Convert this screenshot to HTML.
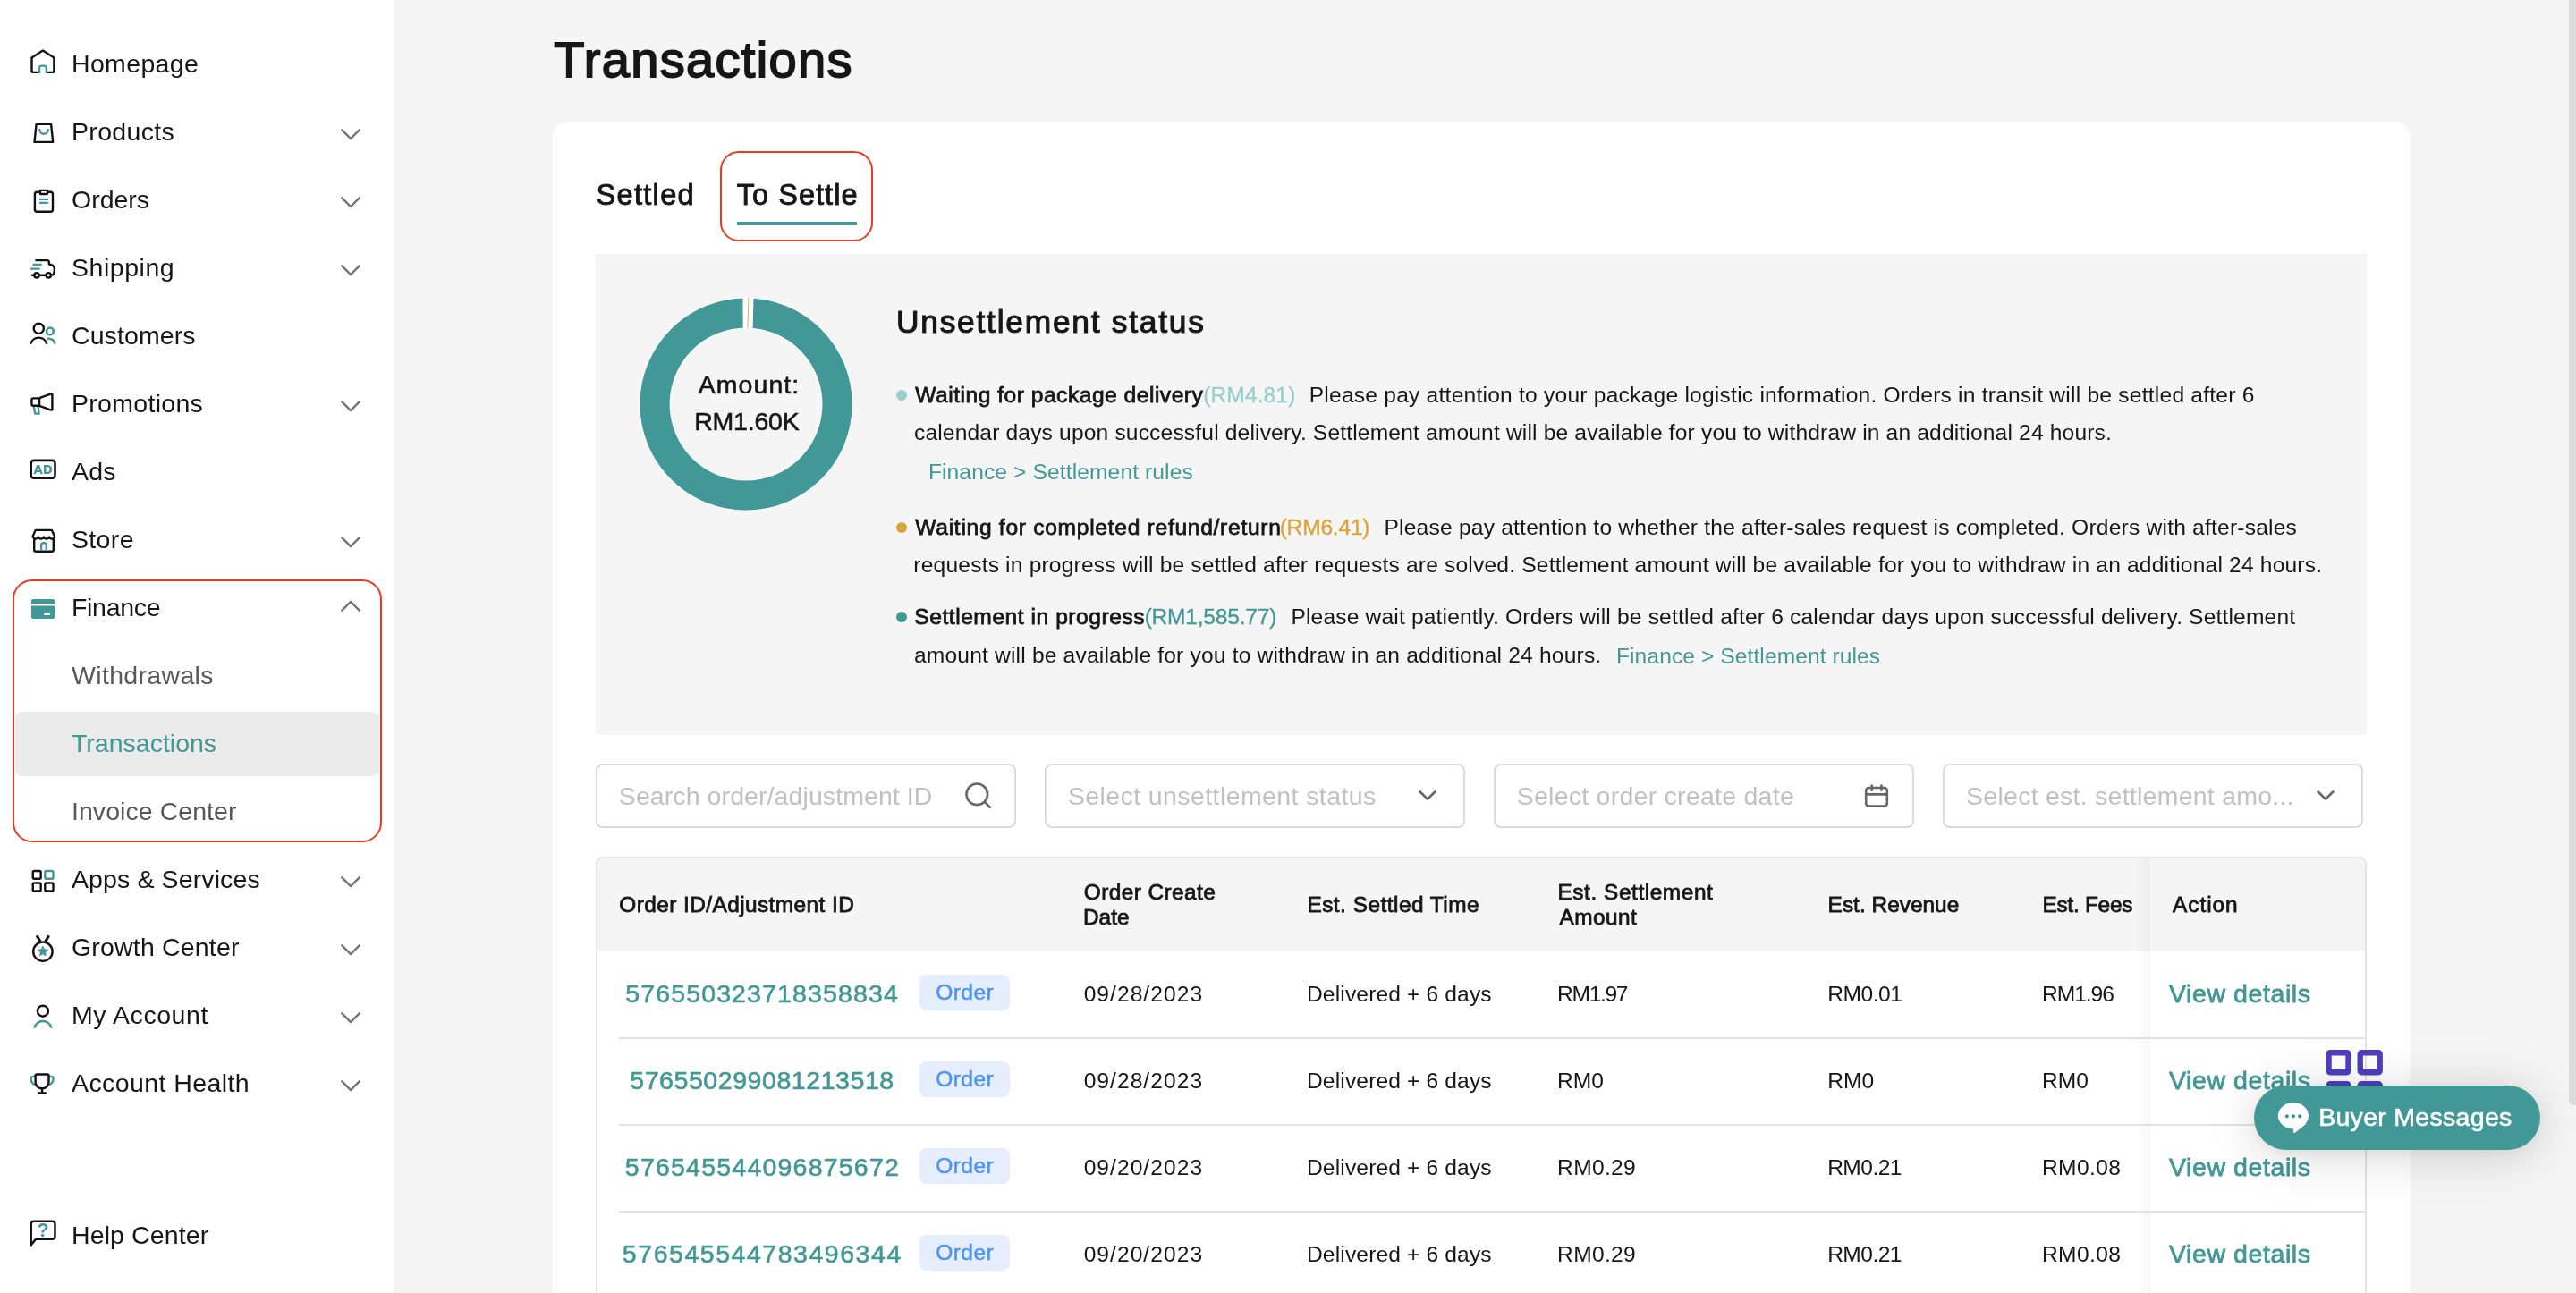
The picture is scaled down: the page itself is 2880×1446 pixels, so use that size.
<!DOCTYPE html>
<html lang="en"><head><meta charset="utf-8"><title>Transactions</title>
<style>
html,body{margin:0;padding:0;width:2880px;height:1446px;overflow:hidden;background:#f5f5f5;font-family:"Liberation Sans",sans-serif;}
.t{position:absolute;white-space:pre;line-height:1;z-index:2;}
.b{position:absolute;box-sizing:border-box;}
svg{position:absolute;overflow:visible;}
#app{position:absolute;left:0;top:0;width:2880px;height:1446px;overflow:hidden;will-change:transform;}
.z5{z-index:5}.z6{z-index:6}
</style></head><body>
<div id="app">
<nav>
<div class="b" style="left:0px;top:0px;width:440px;height:1446px;background:#fff;"></div>
<div class="b" style="left:17px;top:796px;width:407px;height:72px;background:#ebebeb;border-radius:8px;"></div>
<div class="b" style="left:14px;top:648px;width:413px;height:294px;border:2px solid #ea3b1c;border-radius:22px;"></div>
<svg style="left:372px;top:126.5px" width="40" height="40" viewBox="0 0 40 40"><path d="M10.4 18.4 L20.05 28.1 L29.7 18.4" fill="none" stroke="#737373" stroke-width="2.3" stroke-linecap="square"/></svg>
<svg style="left:372px;top:202.5px" width="40" height="40" viewBox="0 0 40 40"><path d="M10.4 18.4 L20.05 28.1 L29.7 18.4" fill="none" stroke="#737373" stroke-width="2.3" stroke-linecap="square"/></svg>
<svg style="left:372px;top:278.5px" width="40" height="40" viewBox="0 0 40 40"><path d="M10.4 18.4 L20.05 28.1 L29.7 18.4" fill="none" stroke="#737373" stroke-width="2.3" stroke-linecap="square"/></svg>
<svg style="left:372px;top:430.5px" width="40" height="40" viewBox="0 0 40 40"><path d="M10.4 18.4 L20.05 28.1 L29.7 18.4" fill="none" stroke="#737373" stroke-width="2.3" stroke-linecap="square"/></svg>
<svg style="left:372px;top:582.5px" width="40" height="40" viewBox="0 0 40 40"><path d="M10.4 18.4 L20.05 28.1 L29.7 18.4" fill="none" stroke="#737373" stroke-width="2.3" stroke-linecap="square"/></svg>
<svg style="left:372px;top:658.5px" width="40" height="40" viewBox="0 0 40 40"><path d="M10.4 23.6 L20.05 13.9 L29.7 23.6" fill="none" stroke="#737373" stroke-width="2.3" stroke-linecap="square"/></svg>
<svg style="left:372px;top:962.5px" width="40" height="40" viewBox="0 0 40 40"><path d="M10.4 18.4 L20.05 28.1 L29.7 18.4" fill="none" stroke="#737373" stroke-width="2.3" stroke-linecap="square"/></svg>
<svg style="left:372px;top:1038.5px" width="40" height="40" viewBox="0 0 40 40"><path d="M10.4 18.4 L20.05 28.1 L29.7 18.4" fill="none" stroke="#737373" stroke-width="2.3" stroke-linecap="square"/></svg>
<svg style="left:372px;top:1114.5px" width="40" height="40" viewBox="0 0 40 40"><path d="M10.4 18.4 L20.05 28.1 L29.7 18.4" fill="none" stroke="#737373" stroke-width="2.3" stroke-linecap="square"/></svg>
<svg style="left:372px;top:1190.5px" width="40" height="40" viewBox="0 0 40 40"><path d="M10.4 18.4 L20.05 28.1 L29.7 18.4" fill="none" stroke="#737373" stroke-width="2.3" stroke-linecap="square"/></svg>
<svg style="left:24px;top:44px" width="50" height="50" viewBox="0 0 50 50" fill="none" stroke-width="2.4" stroke-linejoin="round"><path d="M23.9 12.6 L36.4 20.6 V34.9 a2 2 0 0 1 -2 2 H13.5 a2 2 0 0 1 -2 -2 V20.6 Z" stroke="#111"/><rect x="20.1" y="33" width="7.7" height="6" fill="#fff"/><path d="M20.1 38.2 V31.8 a2.2 2.2 0 0 1 2.2 -2.2 H25.6 a2.2 2.2 0 0 1 2.2 2.2 V38.2" stroke="#429896"/></svg>
<svg style="left:24px;top:120px" width="50" height="50" viewBox="0 0 50 50" fill="none" stroke-width="2.4" stroke-linejoin="round"><path d="M16.6 18.9 H33.1 L35.2 38.9 H14.5 Z" stroke="#111"/><path d="M20.3 25 a4.7 4.7 0 0 0 9.4 0" stroke="#429896" stroke-linecap="round"/></svg>
<svg style="left:24px;top:196px" width="50" height="50" viewBox="0 0 50 50" fill="none" stroke-width="2.4" stroke-linejoin="round"><rect x="14.9" y="18.8" width="20.1" height="22" rx="2.6" stroke="#111"/><rect x="20.9" y="16.9" width="8.1" height="4.1" rx="0.6" fill="#fff" stroke="#111"/><path d="M20.1 26.9 H30 M20.1 30.9 H30" stroke="#429896" stroke-width="2.1"/></svg>
<svg style="left:24px;top:272px" width="50" height="50" viewBox="0 0 50 50" fill="none" stroke-width="2.4" stroke-linejoin="round"><path d="M15.4 19.1 H28.6 a2.3 2.3 0 0 1 2.3 2.3 V23.6 C34.6 23.9 36.9 26 36.9 28.8 C36.9 31 36.4 33.2 35.8 34.6 C35.4 35.5 34.6 35.8 33 35.8" stroke="#111"/><path d="M11.2 35.8 H14.3 M19.7 35.8 H27.5" stroke="#111"/><circle cx="17" cy="35.8" r="2.7" stroke="#111"/><circle cx="30.2" cy="35.8" r="2.7" stroke="#111"/><path d="M12.6 24 H22.6 M9.7 28.6 H20.7" stroke="#429896"/></svg>
<svg style="left:24px;top:348px" width="50" height="50" viewBox="0 0 50 50" fill="none" stroke-width="2.4" stroke-linejoin="round"><circle cx="19.3" cy="19.3" r="5.6" stroke="#111"/><path d="M10.2 36.7 A9.4 9.4 0 0 1 28.4 36.7" stroke="#111"/><circle cx="31.9" cy="22.4" r="3.9" stroke="#429896" stroke-width="2.6"/><path d="M28.7 30.9 C33.2 30.3 36.6 32.6 37.7 36.7" stroke="#429896" stroke-width="2.6"/></svg>
<svg style="left:24px;top:424px" width="50" height="50" viewBox="0 0 50 50" fill="none" stroke-width="2.4" stroke-linejoin="round"><path d="M13.8 31 L15.2 38.6 H19.6 L18.7 31" stroke="#429896"/><path d="M20.1 21.4 H13.4 a2 2 0 0 0 -2 2 V27.7 a2 2 0 0 0 2 2 H20.1 Z" stroke="#111"/><path d="M20.1 21.2 L33.2 16.3 a0.9 0.9 0 0 1 1.2 0.85 V33.7 a0.9 0.9 0 0 1 -1.2 0.85 L20.1 29.8" stroke="#111"/></svg>
<svg style="left:24px;top:500px" width="50" height="50" viewBox="0 0 50 50" fill="none" stroke-width="2.4" stroke-linejoin="round"><rect x="10.7" y="14.9" width="26.8" height="19.9" rx="3" stroke="#111" stroke-width="2.6"/><text x="24.1" y="29.8" text-anchor="middle" font-family="'DejaVu Sans','Liberation Sans',sans-serif" font-weight="700" font-size="13.3" fill="#429896" stroke="none" textLength="21.4" lengthAdjust="spacingAndGlyphs">AD</text></svg>
<svg style="left:24px;top:576px" width="50" height="50" viewBox="0 0 50 50" fill="none" stroke-width="2.4" stroke-linejoin="round"><path d="M15.6 16.9 H33.9 L37 23.6 V24.6 q-3.05 4.4 -6.1 0 q-3 4.4 -6.05 0 q-3 4.4 -6.05 0 q-3 4.4 -6.05 0 V23.6 Z" stroke="#111"/><path d="M14.2 26 V38.8 a2 2 0 0 0 2 2 H33.8 a2 2 0 0 0 2 -2 V26" stroke="#111"/><path d="M22.1 39.6 V33.5 a2.2 2.2 0 0 1 2.2 -2.2 H25.6 a2.2 2.2 0 0 1 2.2 2.2 V39.6" stroke="#429896"/></svg>
<svg style="left:24px;top:654px" width="50" height="50" viewBox="0 0 50 50" fill="none" stroke-width="2.4" stroke-linejoin="round"><path d="M10.9 20.9 V18 a2.1 2.1 0 0 1 2.1 -2.1 H35.2 a2.1 2.1 0 0 1 2.1 2.1 V20.9 Z" fill="#429896"/><path d="M10.9 23.4 H37.3 V36 a2.1 2.1 0 0 1 -2.1 2.1 H13 a2.1 2.1 0 0 1 -2.1 -2.1 Z" fill="#429896"/><rect x="25.2" y="31" width="6.9" height="3" rx="0.6" fill="#fff"/></svg>
<svg style="left:24px;top:958px" width="50" height="50" viewBox="0 0 50 50" fill="none" stroke-width="2.4" stroke-linejoin="round"><rect x="12.75" y="16.05" width="8.9" height="8.7" rx="1.4" stroke="#111"/><rect x="26.3" y="16.05" width="9.2" height="8.7" rx="1.4" stroke="#429896"/><rect x="12.75" y="29.55" width="8.9" height="8.9" rx="1.4" stroke="#111"/><rect x="26.3" y="29.55" width="9.2" height="8.9" rx="1.4" stroke="#111"/></svg>
<svg style="left:24px;top:1034px" width="50" height="50" viewBox="0 0 50 50" fill="none" stroke-width="2.4" stroke-linejoin="round"><circle cx="23.9" cy="30.2" r="10.7" stroke="#111"/><path d="M17.1 12.3 L21.2 19.2 M30.7 12.3 L26.6 19.2" stroke="#111" stroke-width="3.1"/><path d="M23.9 24 L25.6 27.6 L29.8 28.2 L26.7 31 L27.5 35 L23.9 33.1 L20.3 35 L21.1 31 L18 28.2 L22.2 27.6 Z" fill="#429896" stroke="#429896" stroke-width="0.6"/></svg>
<svg style="left:24px;top:1110px" width="50" height="50" viewBox="0 0 50 50" fill="none" stroke-width="2.4" stroke-linejoin="round"><circle cx="23.9" cy="20.7" r="6" stroke="#111"/><path d="M14.2 39.8 A10 10 0 0 1 33.7 39.8" stroke="#429896"/></svg>
<svg style="left:24px;top:1186px" width="50" height="50" viewBox="0 0 50 50" fill="none" stroke-width="2.4" stroke-linejoin="round"><path d="M15.6 18 H12.6 a2 2 0 0 0 -2 2 C10.6 23.6 12.2 26.2 15.6 27.2 M30.5 18 H33.6 a2 2 0 0 1 2 2 C35.6 23.6 34 26.2 30.5 27.2" stroke="#429896"/><path d="M17.1 15.5 H29 a1.5 1.5 0 0 1 1.5 1.5 V24 C30.5 28.4 27.2 31.3 23.05 31.3 C18.9 31.3 15.6 28.4 15.6 24 V17 a1.5 1.5 0 0 1 1.5 -1.5 Z" stroke="#111"/><path d="M23.05 31.3 V36.4 M18.4 36.4 H27.8" stroke="#111"/></svg>
<svg style="left:24px;top:1356px" width="50" height="50" viewBox="0 0 50 50" fill="none" stroke-width="2.4" stroke-linejoin="round"><path d="M10.7 36.2 V12.7 a3 3 0 0 1 3 -3 H34.5 a3 3 0 0 1 3 3 V26.7 a3 3 0 0 1 -3 3 H17 a2 2 0 0 0 -1.5 0.7 Z" stroke="#111" stroke-width="2.5"/><text x="24" y="27.2" text-anchor="middle" font-family="'Liberation Sans',sans-serif" font-weight="700" font-size="21.5" fill="#429896" stroke="none">?</text></svg>
<span class="t" style="left:80.00px;top:57px;font-size:28.5px;letter-spacing:0.340px;color:#161616;">Homepage</span>
<span class="t" style="left:80.00px;top:133px;font-size:28.5px;letter-spacing:0.328px;color:#161616;">Products</span>
<span class="t" style="left:80.00px;top:209px;font-size:28.5px;letter-spacing:-0.006px;color:#161616;">Orders</span>
<span class="t" style="left:80.00px;top:285px;font-size:28.5px;letter-spacing:0.536px;color:#161616;">Shipping</span>
<span class="t" style="left:80.00px;top:361px;font-size:28.5px;letter-spacing:0.085px;color:#161616;">Customers</span>
<span class="t" style="left:80.00px;top:437px;font-size:28.5px;letter-spacing:0.303px;color:#161616;">Promotions</span>
<span class="t" style="left:80.00px;top:513px;font-size:28.5px;letter-spacing:0.227px;color:#161616;">Ads</span>
<span class="t" style="left:80.00px;top:589px;font-size:28.5px;letter-spacing:0.348px;color:#161616;">Store</span>
<span class="t" style="left:80.00px;top:665px;font-size:28.5px;letter-spacing:-0.315px;color:#161616;">Finance</span>
<span class="t" style="left:80.00px;top:741px;font-size:28.5px;letter-spacing:0.331px;color:#585858;">Withdrawals</span>
<span class="t" style="left:80.00px;top:817px;font-size:28.5px;letter-spacing:-0.001px;color:#429896;">Transactions</span>
<span class="t" style="left:80.00px;top:893px;font-size:28.5px;letter-spacing:0.051px;color:#585858;">Invoice Center</span>
<span class="t" style="left:80.00px;top:969px;font-size:28.5px;letter-spacing:0.113px;color:#161616;">Apps &amp; Services</span>
<span class="t" style="left:80.00px;top:1045px;font-size:28.5px;letter-spacing:0.175px;color:#161616;">Growth Center</span>
<span class="t" style="left:80.00px;top:1121px;font-size:28.5px;letter-spacing:0.559px;color:#161616;">My Account</span>
<span class="t" style="left:80.00px;top:1197px;font-size:28.5px;letter-spacing:0.409px;color:#161616;">Account Health</span>
<span class="t" style="left:80.00px;top:1367px;font-size:28.5px;letter-spacing:0.105px;color:#161616;">Help Center</span>
</nav>
<main>
<div class="b" style="left:2872px;top:-8px;width:12px;height:1244px;background:#dcdcdc;border-radius:6px;"></div>
<div class="b" style="left:618px;top:136px;width:2076px;height:1400px;background:#fff;border-radius:16px;"></div>
<div class="b" style="left:805px;top:169px;width:171px;height:101px;border:2px solid #ea3b1c;border-radius:21px;"></div>
<div class="b" style="left:824px;top:248px;width:134px;height:4px;background:#429896;"></div>
<div class="b" style="left:666px;top:284px;width:1980px;height:538px;background:#f5f5f5;"></div>
<svg style="left:0px;top:0px" width="2880" height="1446" viewBox="0 0 2880 1446"><circle cx="834.05" cy="452" r="102.025" fill="none" stroke="#429896" stroke-width="34.35000000000001"/><circle cx="834.05" cy="452" r="119.2" fill="none" stroke="#fff" stroke-width="1.2" stroke-opacity="0.9"/><circle cx="834.05" cy="452" r="84.85" fill="none" stroke="#fff" stroke-width="1.2" stroke-opacity="0.9"/><path d="M830.4 331.8 L842.5 331.8 L841.6 368.15 L830.7 368.15 Z" fill="#fff"/><path d="M836.9 332.8 L835.9 367.15" stroke="#e0a63c" stroke-width="0.9"/></svg>
<div class="b" style="left:1002px;top:436px;width:12px;height:12px;background:#97cfcc;border-radius:6px;"></div>
<div class="b" style="left:1002px;top:584px;width:12px;height:12px;background:#dba43b;border-radius:6px;"></div>
<div class="b" style="left:1002px;top:684px;width:12px;height:12px;background:#429896;border-radius:6px;"></div>
<div class="b" style="left:666px;top:854px;width:470px;height:72px;background:#fff;border:2px solid #dadada;border-radius:8px;"></div>
<div class="b" style="left:1168px;top:854px;width:470px;height:72px;background:#fff;border:2px solid #dadada;border-radius:8px;"></div>
<div class="b" style="left:1670px;top:854px;width:470px;height:72px;background:#fff;border:2px solid #dadada;border-radius:8px;"></div>
<div class="b" style="left:2172px;top:854px;width:470px;height:72px;background:#fff;border:2px solid #dadada;border-radius:8px;"></div>
<svg style="left:1070px;top:866px" width="48" height="48" viewBox="0 0 48 48"><circle cx="22.3" cy="22.3" r="11.8" fill="none" stroke="#666666" stroke-width="2.6"/><path d="M30.9 30.9 L37.6 37.6" stroke="#666666" stroke-width="2.6" fill="none"/></svg>
<svg style="left:1576px;top:869px" width="40" height="40" viewBox="0 0 40 40"><path d="M11.6 16.5 L20 24.6 L28.4 16.5" fill="none" stroke="#666666" stroke-width="2.7" stroke-linecap="round" stroke-linejoin="round"/></svg>
<svg style="left:2580px;top:869px" width="40" height="40" viewBox="0 0 40 40"><path d="M11.6 16.5 L20 24.6 L28.4 16.5" fill="none" stroke="#666666" stroke-width="2.7" stroke-linecap="round" stroke-linejoin="round"/></svg>
<svg style="left:2074px;top:866px" width="48" height="48" viewBox="0 0 48 48"><rect x="12.2" y="15" width="23.6" height="20.6" rx="3" fill="none" stroke="#666666" stroke-width="2.6"/><path d="M12.2 22.4 H35.8 M18.7 11.4 V18.8 M29.4 11.4 V18.8" stroke="#666666" stroke-width="2.6" fill="none"/></svg>
<div class="b" style="left:666px;top:958px;width:1980px;height:600px;background:#fff;border:2px solid #e3e3e3;border-radius:9px;"></div>
<div class="b" style="left:668px;top:960px;width:1976px;height:104px;background:#f5f5f5;border-radius:7px 7px 0 0;"></div>
<div class="b" style="left:2389px;top:960px;width:15px;height:486px;background:linear-gradient(to right, rgba(0,0,0,0), rgba(0,0,0,0.03));"></div>
<div class="b" style="left:692px;top:1160px;width:1952px;height:2px;background:#e2e2e2;"></div>
<div class="b" style="left:692px;top:1257px;width:1952px;height:2px;background:#e2e2e2;"></div>
<div class="b" style="left:692px;top:1354px;width:1952px;height:2px;background:#e2e2e2;"></div>
<div class="b" style="left:1028px;top:1089.8px;width:101px;height:40px;background:#e6edfd;border-radius:8px;"></div>
<div class="b" style="left:1028px;top:1186.8px;width:101px;height:40px;background:#e6edfd;border-radius:8px;"></div>
<div class="b" style="left:1028px;top:1283.8px;width:101px;height:40px;background:#e6edfd;border-radius:8px;"></div>
<div class="b" style="left:1028px;top:1380.8px;width:101px;height:40px;background:#e6edfd;border-radius:8px;"></div>
<span class="t" style="left:619.24px;top:39px;font-size:56px;letter-spacing:1.344px;color:#161616;-webkit-text-stroke:1.8px #161616;">Transactions</span>
<span class="t" style="left:666.47px;top:202px;font-size:32.5px;letter-spacing:1.331px;color:#161616;-webkit-text-stroke:0.9px #161616;">Settled</span>
<span class="t" style="left:823.72px;top:202px;font-size:32.5px;letter-spacing:1.038px;color:#161616;-webkit-text-stroke:0.9px #161616;">To Settle</span>
<span class="t" style="left:780.64px;top:416px;font-size:28.5px;letter-spacing:1.086px;color:#161616;-webkit-text-stroke:0.6px #161616;">Amount:</span>
<span class="t" style="left:776.21px;top:457px;font-size:28.5px;letter-spacing:-0.209px;color:#161616;-webkit-text-stroke:0.6px #161616;">RM1.60K</span>
<span class="t" style="left:1002.03px;top:342px;font-size:35.3px;letter-spacing:1.776px;color:#161616;-webkit-text-stroke:1.1px #161616;">Unsettlement status</span>
<span class="t" style="left:1023.29px;top:430px;font-size:24.6px;letter-spacing:0.501px;color:#161616;-webkit-text-stroke:0.8px #161616;">Waiting for package delivery</span>
<span class="t" style="left:1345.15px;top:430px;font-size:24.6px;letter-spacing:0.100px;color:#97cfcc;-webkit-text-stroke:0.35px #97cfcc;">(RM4.81)</span>
<span class="t" style="left:1463.68px;top:430px;font-size:24.6px;letter-spacing:0.221px;color:#161616;">Please pay attention to your package logistic information. Orders in transit will be settled after 6</span>
<span class="t" style="left:1021.95px;top:472px;font-size:24.6px;letter-spacing:0.155px;color:#161616;">calendar days upon successful delivery. Settlement amount will be available for you to withdraw in an additional 24 hours.</span>
<span class="t" style="left:1037.88px;top:516px;font-size:24.6px;letter-spacing:0.107px;color:#429896;">Finance &gt; Settlement rules</span>
<span class="t" style="left:1023.29px;top:578px;font-size:24.6px;letter-spacing:0.707px;color:#161616;-webkit-text-stroke:0.8px #161616;">Waiting for completed refund/return</span>
<span class="t" style="left:1430.65px;top:578px;font-size:24.6px;letter-spacing:-0.228px;color:#dba43b;-webkit-text-stroke:0.35px #dba43b;">(RM6.41)</span>
<span class="t" style="left:1547.48px;top:578px;font-size:24.6px;letter-spacing:0.200px;color:#161616;">Please pay attention to whether the after-sales request is completed. Orders with after-sales</span>
<span class="t" style="left:1021.37px;top:620px;font-size:24.6px;letter-spacing:0.178px;color:#161616;">requests in progress will be settled after requests are solved. Settlement amount will be available for you to withdraw in an additional 24 hours.</span>
<span class="t" style="left:1022.28px;top:678px;font-size:24.6px;letter-spacing:0.535px;color:#161616;-webkit-text-stroke:0.8px #161616;">Settlement in progress</span>
<span class="t" style="left:1279.65px;top:678px;font-size:24.6px;letter-spacing:-0.243px;color:#429896;-webkit-text-stroke:0.35px #429896;">(RM1,585.77)</span>
<span class="t" style="left:1443.38px;top:678px;font-size:24.6px;letter-spacing:0.159px;color:#161616;">Please wait patiently. Orders will be settled after 6 calendar days upon successful delivery. Settlement</span>
<span class="t" style="left:1021.95px;top:721px;font-size:24.6px;letter-spacing:0.175px;color:#161616;">amount will be available for you to withdraw in an additional 24 hours.</span>
<span class="t" style="left:1806.98px;top:722px;font-size:24.6px;letter-spacing:0.079px;color:#429896;">Finance &gt; Settlement rules</span>
<span class="t" style="left:691.81px;top:876px;font-size:28.5px;letter-spacing:0.086px;color:#c1c1c1;">Search order/adjustment ID</span>
<span class="t" style="left:1193.91px;top:876px;font-size:28.5px;letter-spacing:0.402px;color:#c1c1c1;">Select unsettlement status</span>
<span class="t" style="left:1695.71px;top:876px;font-size:28.5px;letter-spacing:0.255px;color:#c1c1c1;">Select order create date</span>
<span class="t" style="left:2198.11px;top:876px;font-size:28.5px;letter-spacing:0.247px;color:#c1c1c1;">Select est. settlement amo...</span>
<span class="t" style="left:692.34px;top:1000px;font-size:24.4px;letter-spacing:0.426px;color:#161616;-webkit-text-stroke:0.8px #161616;">Order ID/Adjustment ID</span>
<span class="t" style="left:1211.84px;top:986px;font-size:24.4px;letter-spacing:0.427px;color:#161616;-webkit-text-stroke:0.8px #161616;">Order Create</span>
<span class="t" style="left:1211.00px;top:1014px;font-size:24.4px;letter-spacing:0.000px;color:#161616;-webkit-text-stroke:0.8px #161616;">Date</span>
<span class="t" style="left:1461.40px;top:1000px;font-size:24.4px;letter-spacing:0.489px;color:#161616;-webkit-text-stroke:0.8px #161616;">Est. Settled Time</span>
<span class="t" style="left:1741.50px;top:986px;font-size:24.4px;letter-spacing:0.564px;color:#161616;-webkit-text-stroke:0.8px #161616;">Est. Settlement</span>
<span class="t" style="left:1743.45px;top:1014px;font-size:24.4px;letter-spacing:0.453px;color:#161616;-webkit-text-stroke:0.8px #161616;">Amount</span>
<span class="t" style="left:2043.60px;top:1000px;font-size:24.4px;letter-spacing:0.023px;color:#161616;-webkit-text-stroke:0.8px #161616;">Est. Revenue</span>
<span class="t" style="left:2283.40px;top:1000px;font-size:24.4px;letter-spacing:-0.244px;color:#161616;-webkit-text-stroke:0.8px #161616;">Est. Fees</span>
<span class="t" style="left:2429.05px;top:1000px;font-size:24.4px;letter-spacing:0.947px;color:#161616;-webkit-text-stroke:0.8px #161616;">Action</span>
<span class="t" style="left:699.16px;top:1097px;font-size:28.5px;letter-spacing:1.145px;color:#429896;-webkit-text-stroke:0.6px #429896;">576550323718358834</span>
<span class="t" style="left:1046.28px;top:1098px;font-size:24.6px;letter-spacing:0.375px;color:#4d95f3;-webkit-text-stroke:0.5px #4d95f3;">Order</span>
<span class="t" style="left:1211.64px;top:1100px;font-size:24.6px;letter-spacing:1.039px;color:#161616;">09/28/2023</span>
<span class="t" style="left:1460.98px;top:1100px;font-size:24.6px;letter-spacing:0.136px;color:#161616;">Delivered + 6 days</span>
<span class="t" style="left:1741.08px;top:1100px;font-size:24.6px;letter-spacing:-1.334px;color:#161616;">RM1.97</span>
<span class="t" style="left:2043.18px;top:1100px;font-size:24.6px;letter-spacing:-0.461px;color:#161616;">RM0.01</span>
<span class="t" style="left:2282.98px;top:1100px;font-size:24.6px;letter-spacing:-1.045px;color:#161616;">RM1.96</span>
<span class="t" style="left:2424.97px;top:1097px;font-size:28.5px;letter-spacing:0.590px;color:#429896;-webkit-text-stroke:0.8px #429896;">View details</span>
<span class="t" style="left:704.31px;top:1194px;font-size:28.5px;letter-spacing:0.563px;color:#429896;-webkit-text-stroke:0.6px #429896;">576550299081213518</span>
<span class="t" style="left:1046.28px;top:1195px;font-size:24.6px;letter-spacing:0.375px;color:#4d95f3;-webkit-text-stroke:0.5px #4d95f3;">Order</span>
<span class="t" style="left:1211.64px;top:1197px;font-size:24.6px;letter-spacing:1.039px;color:#161616;">09/28/2023</span>
<span class="t" style="left:1460.98px;top:1197px;font-size:24.6px;letter-spacing:0.136px;color:#161616;">Delivered + 6 days</span>
<span class="t" style="left:1741.08px;top:1197px;font-size:24.6px;letter-spacing:0.021px;color:#161616;">RM0</span>
<span class="t" style="left:2043.18px;top:1197px;font-size:24.6px;letter-spacing:0.021px;color:#161616;">RM0</span>
<span class="t" style="left:2282.98px;top:1197px;font-size:24.6px;letter-spacing:0.021px;color:#161616;">RM0</span>
<span class="t" style="left:2424.97px;top:1194px;font-size:28.5px;letter-spacing:0.590px;color:#429896;-webkit-text-stroke:0.8px #429896;">View details</span>
<span class="t" style="left:698.86px;top:1291px;font-size:28.5px;letter-spacing:1.215px;color:#429896;-webkit-text-stroke:0.6px #429896;">576545544096875672</span>
<span class="t" style="left:1046.28px;top:1292px;font-size:24.6px;letter-spacing:0.375px;color:#4d95f3;-webkit-text-stroke:0.5px #4d95f3;">Order</span>
<span class="t" style="left:1211.64px;top:1294px;font-size:24.6px;letter-spacing:1.039px;color:#161616;">09/20/2023</span>
<span class="t" style="left:1460.98px;top:1294px;font-size:24.6px;letter-spacing:0.136px;color:#161616;">Delivered + 6 days</span>
<span class="t" style="left:1741.08px;top:1294px;font-size:24.6px;letter-spacing:0.312px;color:#161616;">RM0.29</span>
<span class="t" style="left:2043.18px;top:1294px;font-size:24.6px;letter-spacing:-0.561px;color:#161616;">RM0.21</span>
<span class="t" style="left:2282.98px;top:1294px;font-size:24.6px;letter-spacing:0.352px;color:#161616;">RM0.08</span>
<span class="t" style="left:2424.97px;top:1291px;font-size:28.5px;letter-spacing:0.590px;color:#429896;-webkit-text-stroke:0.8px #429896;">View details</span>
<span class="t" style="left:695.86px;top:1388px;font-size:28.5px;letter-spacing:1.533px;color:#429896;-webkit-text-stroke:0.6px #429896;">576545544783496344</span>
<span class="t" style="left:1046.28px;top:1389px;font-size:24.6px;letter-spacing:0.375px;color:#4d95f3;-webkit-text-stroke:0.5px #4d95f3;">Order</span>
<span class="t" style="left:1211.64px;top:1391px;font-size:24.6px;letter-spacing:1.039px;color:#161616;">09/20/2023</span>
<span class="t" style="left:1460.98px;top:1391px;font-size:24.6px;letter-spacing:0.136px;color:#161616;">Delivered + 6 days</span>
<span class="t" style="left:1741.08px;top:1391px;font-size:24.6px;letter-spacing:0.312px;color:#161616;">RM0.29</span>
<span class="t" style="left:2043.18px;top:1391px;font-size:24.6px;letter-spacing:-0.561px;color:#161616;">RM0.21</span>
<span class="t" style="left:2282.98px;top:1391px;font-size:24.6px;letter-spacing:0.352px;color:#161616;">RM0.08</span>
<span class="t" style="left:2424.97px;top:1388px;font-size:28.5px;letter-spacing:0.590px;color:#429896;-webkit-text-stroke:0.8px #429896;">View details</span>
</main>
<aside>
<svg class="z5" style="left:0px;top:0px" width="2880" height="1446" viewBox="0 0 2880 1446"><rect x="2603.5" y="1177.2" width="22" height="22" rx="1.5" fill="none" stroke="#4f3fc0" stroke-width="6.4"/><rect x="2638.7" y="1177.2" width="22" height="22" rx="1.5" fill="none" stroke="#4f3fc0" stroke-width="6.4"/><rect x="2603.5" y="1212.2" width="22" height="22" rx="1.5" fill="none" stroke="#4f3fc0" stroke-width="6.4"/><rect x="2638.7" y="1212.2" width="22" height="22" rx="1.5" fill="none" stroke="#4f3fc0" stroke-width="6.4"/></svg>
<div class="b z5" style="left:2520px;top:1214px;width:320px;height:72px;background:#429896;border-radius:36px;box-shadow:0 6px 56px rgba(0,0,0,0.17), 0 2px 16px rgba(0,0,0,0.05);"></div>
<svg class="z6" style="left:2540px;top:1226px" width="48" height="48" viewBox="0 0 48 48"><ellipse cx="23.95" cy="21.75" rx="17.05" ry="14.65" fill="#fff"/><path d="M23.4 33 L24.3 40.4 Q24.5 41.5 25.6 40.9 L38.6 30.4 Z" fill="#fff"/><circle cx="16.9" cy="22.3" r="2.1" fill="#429896"/><circle cx="24" cy="22.3" r="2.1" fill="#429896"/><circle cx="31.1" cy="22.3" r="2.1" fill="#429896"/></svg>
<span class="t z6" style="left:2592.16px;top:1235px;font-size:28.5px;letter-spacing:0.300px;color:#fff;-webkit-text-stroke:0.6px #fff;">Buyer Messages</span>
</aside>
</div>
</body></html>
